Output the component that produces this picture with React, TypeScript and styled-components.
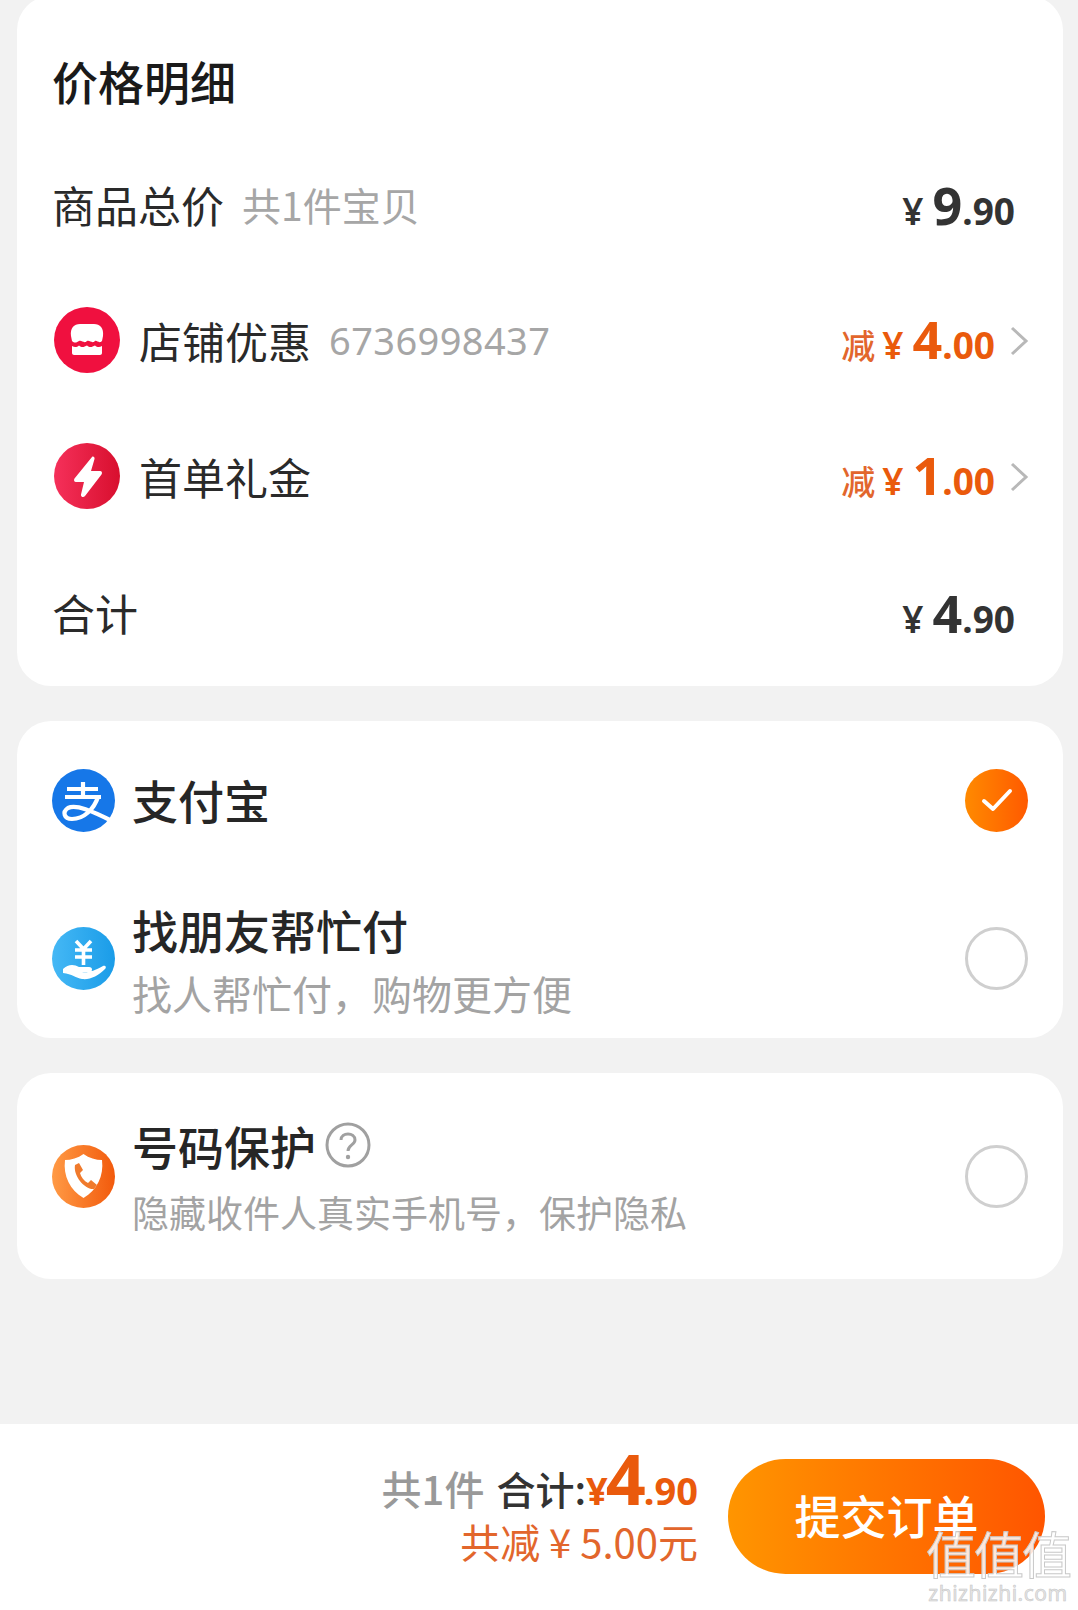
import React from "react"
import styled, { createGlobalStyle } from "styled-components"

const GlobalStyle = createGlobalStyle`
	html, body {
		margin: 0;
		padding: 0;
		background: #f2f2f2;
	}
	* {
		box-sizing: border-box;
	}
`

const Page = styled.div`
	position: relative;
	width: 1078px;
	height: 1610px;
	display: flex;
	flex-direction: column;
	overflow: hidden;
	background: #f2f2f2;
	font-family: "Noto Sans CJK SC", "Noto Sans", sans-serif;
	color: #222;
`

const Card = styled.section`
	margin: 35px 15px 0 17px;
	background: #fff;
	border-radius: 34px;
`

const PriceCard = styled(Card)`
	margin-top: -4px;
	height: 690px;
	padding: 4px 0 0 35px;
	display: flex;
	flex-direction: column;
`

const CardTitle = styled.h2`
	margin: 0;
	height: 136px;
	padding-top: 47px;
	font-size: 46px;
	line-height: 66px;
	font-weight: 500;
	color: #1a1a1a;
`

const PriceRow = styled.div`
	height: 136px;
	display: flex;
	align-items: center;
	padding-right: 34px;
`

const RowIcon = styled.svg`
	width: 66px;
	height: 66px;
	flex: none;
	margin: 0 19px 0 2px;
`

const RowLabel = styled.span`
	font-size: 43px;
	font-weight: 400;
	color: #2a2a2a;
`

const RowNote = styled.span<{ $digits?: boolean }>`
	margin-left: 18px;
	font-size: ${(p) => (p.$digits ? 38 : 39)}px;
	color: #a6a6a6;
	font-family: ${(p) =>
		p.$digits
			? '"Noto Sans", sans-serif'
			: '"Noto Sans CJK SC", sans-serif'};
	letter-spacing: ${(p) => (p.$digits ? 0.4 : 0)}px;
`

const Amount = styled.span<{ $sale?: boolean }>`
	margin-left: auto;
	display: flex;
	align-items: baseline;
	font-family: "Noto Sans", "Noto Sans CJK SC", sans-serif;
	font-weight: 700;
	color: ${(p) => (p.$sale ? "#ea5a0c" : "#333")};
	padding-right: ${(p) => (p.$sale ? 0 : 14)}px;
	transform: translateY(${(p) => (p.$sale ? 1 : 3)}px);
`

const Prefix = styled.span`
	font-family: "Noto Sans CJK SC", sans-serif;
	font-size: 34px;
	font-weight: 500;
	color: #e2662c;
	margin-right: 7px;
`

const Yen = styled.span`
	font-size: 37px;
	font-weight: 600;
	margin-right: 9px;
`

const BigNum = styled.span`
	font-size: 52px;
	font-weight: 700;
	line-height: 1;
`

const SmallNum = styled.span`
	font-size: 37px;
`

const Chevron = styled.svg`
	width: 20px;
	height: 32px;
	flex: none;
	margin-left: 14px;
	transform: translateY(1px);
`

const PayRow = styled.div<{ $height: number }>`
	height: ${(p) => p.$height}px;
	display: flex;
	align-items: center;
	padding: 0 35px;
`

const PayIcon = styled.svg`
	width: 63px;
	height: 63px;
	flex: none;
	margin-right: 17px;
`

const PayText = styled.div<{ $single?: boolean }>`
	display: flex;
	flex-direction: column;
	flex: 1;
	padding: ${(p) => (p.$single ? "0 0 3px" : "5px 0 0")};
`

const PayTitle = styled.div`
	display: flex;
	align-items: center;
	height: 63px;
	font-size: 46px;
	font-weight: 500;
	color: #262626;
`

const HelpIcon = styled.svg`
	width: 46px;
	height: 46px;
	margin-left: 9px;
`

const PaySub = styled.div<{ $small?: boolean }>`
	height: 63px;
	margin-top: ${(p) => (p.$small ? 5 : 2)}px;
	line-height: 63px;
	font-size: ${(p) => (p.$small ? 37 : 40)}px;
	color: #a3a3a3;
`

const Radio = styled.span<{ $on?: boolean }>`
	width: 63px;
	height: 63px;
	flex: none;
	border-radius: 50%;
	display: flex;
	align-items: center;
	justify-content: center;
	border: ${(p) => (p.$on ? "none" : "3px solid #cfcfcf")};
	background: ${(p) =>
		p.$on ? "linear-gradient(90deg, #ff8a00, #ff5a00)" : "transparent"};
`

const Footer = styled.footer`
	margin-top: auto;
	height: 186px;
	background: #fff;
	display: flex;
	justify-content: flex-end;
	padding: 35px 33px 0 0;
`

const Totals = styled.div`
	display: flex;
	flex-direction: column;
	align-items: flex-end;
	margin: -16px 30px 0 0;
`

const TotalLine = styled.div`
	display: flex;
	align-items: baseline;
	height: 75px;
	font-size: 39px;
	font-weight: 500;
	color: #333;
`

const Muted = styled.span`
	color: #999;
	font-size: 40px;
	font-weight: 500;
	margin-right: 12px;
`

const TotalPrice = styled.span`
	display: flex;
	align-items: baseline;
	color: #ea5a0c;
	font-family: "Noto Sans", "Noto Sans CJK SC", sans-serif;
	font-weight: 700;
`

const TotalBig = styled.span`
	font-size: 70px;
	font-weight: 700;
	line-height: 1;
	margin: 0 -2px;
`

const TotalSmall = styled.span`
	font-size: 38px;
`

const Saved = styled.div`
	font-size: 40px;
	line-height: 46px;
	color: #e2662c;
`

const SubmitButton = styled.button`
	width: 317px;
	height: 115px;
	border: none;
	border-radius: 58px;
	background: linear-gradient(90deg, #ff9500, #ff5500);
	color: #fff;
	font-family: "Noto Sans CJK SC", sans-serif;
	font-size: 46px;
	font-weight: 500;
	padding: 0 0 6px;
`

const Watermark = styled.div`
	position: absolute;
	right: 8px;
	bottom: 4px;
	display: flex;
	flex-direction: column;
	align-items: center;
	color: rgba(255, 255, 255, 0.85);
	-webkit-text-stroke: 1px #c9c9c9;
`

const WatermarkMark = styled.div`
	font-size: 50px;
	line-height: 56px;
	font-weight: 400;
	letter-spacing: -2px;
`

const WatermarkUrl = styled.div`
	font-family: "Noto Sans", sans-serif;
	font-size: 21px;
	line-height: 26px;
	letter-spacing: 0.5px;
	color: #e4e4e4;
	-webkit-text-stroke: 0.5px #c4c4c4;
`

const ChevronRight = () => (
	<Chevron viewBox="0 0 20 32">
		<path d="M3 3 L17 16 L3 29" fill="none" stroke="#b8b8b8" strokeWidth="3" />
	</Chevron>
)

const App = () => {
	return (
		<Page>
			<GlobalStyle />
			<PriceCard>
				<CardTitle>价格明细</CardTitle>
				<PriceRow>
					<RowLabel>商品总价</RowLabel>
					<RowNote>共1件宝贝</RowNote>
					<Amount>
						<Yen>¥</Yen>
						<BigNum>9</BigNum>
						<SmallNum>.90</SmallNum>
					</Amount>
				</PriceRow>
				<PriceRow>
					<RowIcon viewBox="0 0 66 66">
						<circle cx="33" cy="33" r="33" fill="#f0103f" />
						<path
							d="M17 29 C16 21 20 17 26 17 H40 C46 17 50 21 49 29 L48 34 C45 37 43 33 41 34 C38 37 36 33 33 34 C30 37 28 33 25 34 C23 35 21 37 18 34 Z"
							fill="#fff"
						/>
						<path
							d="M18 39 C21 41 23 40 25 38.5 C28 41 30 40 33 38.5 C36 41 38 40 41 38.5 C43 40 45 41 48 39 V46 C48 47 47 48 46 48 H20 C19 48 18 47 18 46 Z"
							fill="#fff"
						/>
					</RowIcon>
					<RowLabel>店铺优惠</RowLabel>
					<RowNote $digits>6736998437</RowNote>
					<Amount $sale>
						<Prefix>减</Prefix>
						<Yen>¥</Yen>
						<BigNum>4</BigNum>
						<SmallNum>.00</SmallNum>
					</Amount>
					<ChevronRight />
				</PriceRow>
				<PriceRow>
					<RowIcon viewBox="0 0 66 66">
						<defs>
							<linearGradient id="bolt" x1="0" x2="1" y1="0" y2="0">
								<stop offset="0" stopColor="#f5305a" />
								<stop offset="1" stopColor="#d80f2e" />
							</linearGradient>
						</defs>
						<circle cx="33" cy="33" r="33" fill="url(#bolt)" />
						<path
							d="M38 14 C39 13 41 14 40.5 16 L37 28 H46 C48 28 48.5 30 47.5 31.5 L31 53 C29.5 55 26.5 54 27 51.5 L30 39 H22 C20 39 19.5 37 20.5 35.5 Z"
							fill="#fff"
						/>
					</RowIcon>
					<RowLabel>首单礼金</RowLabel>
					<Amount $sale>
						<Prefix>减</Prefix>
						<Yen>¥</Yen>
						<BigNum>1</BigNum>
						<SmallNum>.00</SmallNum>
					</Amount>
					<ChevronRight />
				</PriceRow>
				<PriceRow>
					<RowLabel>合计</RowLabel>
					<Amount>
						<Yen>¥</Yen>
						<BigNum>4</BigNum>
						<SmallNum>.90</SmallNum>
					</Amount>
				</PriceRow>
			</PriceCard>

			<Card>
				<PayRow $height={158}>
					<PayIcon viewBox="0 0 63 63">
						<circle cx="31.5" cy="31.5" r="31.5" fill="#1677e8" />
						<path
							d="M15 20 H46 M31 13 V27 M13 28 H49 M46 28 C42 40 32 50 20 50 C12 50 10 43 16 39 C24 35 40 42 60 52"
							fill="none"
							stroke="#fff"
							strokeWidth="4.2"
						/>
					</PayIcon>
					<PayText $single>
						<PayTitle>支付宝</PayTitle>
					</PayText>
					<Radio $on>
						<svg width="32" height="26" viewBox="0 0 32 26">
							<path
								d="M3 14 L12 22 L29 4"
								fill="none"
								stroke="#fff"
								strokeWidth="4"
								strokeLinecap="round"
								strokeLinejoin="round"
							/>
						</svg>
					</Radio>
				</PayRow>
				<PayRow $height={159}>
					<PayIcon viewBox="0 0 63 63">
						<defs>
							<linearGradient id="friend" x1="0" x2="1" y1="0" y2="0">
								<stop offset="0" stopColor="#45b8f5" />
								<stop offset="1" stopColor="#1a9ce8" />
							</linearGradient>
						</defs>
						<circle cx="31.5" cy="31.5" r="31.5" fill="url(#friend)" />
						<path
							d="M24 14 L31.5 22 L39 14 M23 23 H40 M23 30 H40 M31.5 22 V38"
							fill="none"
							stroke="#fff"
							strokeWidth="3.6"
						/>
						<path
							d="M11 42 C16 37 22 37 27 40 H37 C41 40 41 45 37 45 H30 C36 46 42 44 51 39 C53 38 55 40 53 42 C46 49 38 53 30 52 C24 51 20 47 11 46 Z"
							fill="#fff"
						/>
					</PayIcon>
					<PayText>
						<PayTitle>找朋友帮忙付</PayTitle>
						<PaySub>找人帮忙付，购物更方便</PaySub>
					</PayText>
					<Radio />
				</PayRow>
			</Card>

			<Card>
				<PayRow $height={206}>
					<PayIcon viewBox="0 0 63 63">
						<defs>
							<linearGradient id="guard" x1="0" x2="1" y1="0" y2="0">
								<stop offset="0" stopColor="#ff9a45" />
								<stop offset="1" stopColor="#f25a0c" />
							</linearGradient>
						</defs>
						<circle cx="31.5" cy="31.5" r="31.5" fill="url(#guard)" />
						<path
							d="M31.5 9 C37 13 44 15 50 15 C52 31 45 45 31.5 53 C18 45 11 31 13 15 C19 15 26 13 31.5 9 Z"
							fill="#fff"
						/>
						<path
							d="M23 20 L27 18 L31 25 L28 28 C29 32 32 36 36 38 L39 35 L45 40 L42 44 C33 45 21 31 23 20 Z"
							fill="#f07a2c"
						/>
					</PayIcon>
					<PayText>
						<PayTitle>
							号码保护
							<HelpIcon viewBox="0 0 46 46">
								<circle cx="23" cy="23" r="21" fill="none" stroke="#a0a0a0" strokeWidth="3" />
								<path
									d="M16 18 C16 10 30 10 30 18 C30 23 23 23 23 29"
									fill="none"
									stroke="#a0a0a0"
									strokeWidth="3"
								/>
								<circle cx="23" cy="35" r="2.2" fill="#a0a0a0" />
							</HelpIcon>
						</PayTitle>
						<PaySub $small>隐藏收件人真实手机号，保护隐私</PaySub>
					</PayText>
					<Radio />
				</PayRow>
			</Card>

			<Footer>
				<Totals>
					<TotalLine>
						<Muted>共1件</Muted>
						合计:
						<TotalPrice>
							<TotalSmall>¥</TotalSmall>
							<TotalBig>4</TotalBig>
							<TotalSmall>.90</TotalSmall>
						</TotalPrice>
					</TotalLine>
					<Saved>共减 ¥ 5.00元</Saved>
				</Totals>
				<SubmitButton>提交订单</SubmitButton>
			</Footer>
			<Watermark>
				<WatermarkMark>值值值</WatermarkMark>
				<WatermarkUrl>zhizhizhi.com</WatermarkUrl>
			</Watermark>
		</Page>
	)
}

export default App
